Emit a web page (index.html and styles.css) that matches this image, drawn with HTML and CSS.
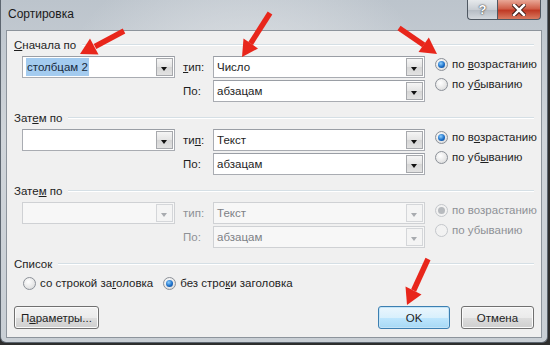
FILE: index.html
```html
<!DOCTYPE html>
<html lang="ru">
  <head>
    <meta charset="UTF-8" />
    <title>Сортировка</title>
    <link rel="stylesheet" href="styles.css">
  </head>
  <body>
    <div class="window">
      <div class="titlebar">
        <span class="title">Сортировка</span>
        <div class="caption">
          <span class="cap-btn help">?</span>
          <span class="cap-btn close">
            <svg width="14" height="12" viewBox="0 0 14 12">
              <path d="M2 1 L12 11 M12 1 L2 11" stroke="#3b1a14" stroke-width="4.5" stroke-linecap="square" />
              <path d="M2 1 L12 11 M12 1 L2 11" stroke="#fff" stroke-width="2.5" stroke-linecap="square" />
            </svg>
          </span>
        </div>
      </div>

      <div class="client">
        <!-- first level -->
        <div class="group">
          <div class="legend"><span><u>С</u>начала по</span></div>
          <div class="sort-grid">
            <div class="combo"><span class="val"><span class="sel">столбцам 2</span></span><span class="drop"></span></div>
            <label class="lbl"><u>т</u>ип:</label>
            <div class="combo"><span class="val">Число</span><span class="drop"></span></div>
            <div class="radios">
              <div class="radio checked"><span class="dot"></span><span>по <u>в</u>озрастанию</span></div>
              <div class="radio"><span class="dot"></span><span>по у<u>б</u>ыванию</span></div>
            </div>
            <label class="lbl lbl-po">По:</label>
            <div class="combo"><span class="val">абзацам</span><span class="drop"></span></div>
          </div>
        </div>

        <!-- second level -->
        <div class="group">
          <div class="legend"><span>Зат<u>е</u>м по</span></div>
          <div class="sort-grid">
            <div class="combo"><span class="val"></span><span class="drop"></span></div>
            <label class="lbl">ти<u>п</u>:</label>
            <div class="combo"><span class="val">Текст</span><span class="drop"></span></div>
            <div class="radios">
              <div class="radio checked"><span class="dot"></span><span>по в<u>о</u>зрастанию</span></div>
              <div class="radio"><span class="dot"></span><span>по уб<u>ы</u>ванию</span></div>
            </div>
            <label class="lbl lbl-po">По:</label>
            <div class="combo"><span class="val">абзацам</span><span class="drop"></span></div>
          </div>
        </div>

        <!-- third level, disabled -->
        <div class="group">
          <div class="legend"><span>Зате<u>м</u> по</span></div>
          <div class="sort-grid disabled">
            <div class="combo"><span class="val"></span><span class="drop"></span></div>
            <label class="lbl">тип:</label>
            <div class="combo"><span class="val">Текст</span><span class="drop"></span></div>
            <div class="radios">
              <div class="radio checked"><span class="dot"></span><span>по возрастанию</span></div>
              <div class="radio"><span class="dot"></span><span>по убыванию</span></div>
            </div>
            <label class="lbl lbl-po">По:</label>
            <div class="combo"><span class="val">абзацам</span><span class="drop"></span></div>
          </div>
        </div>

        <div class="group list-group">
          <div class="legend"><span>Список</span></div>
          <div class="list-row">
            <div class="radio"><span class="dot"></span><span>со строкой за<u>г</u>оловка</span></div>
            <div class="radio checked"><span class="dot"></span><span>без стро<u>к</u>и заголовка</span></div>
          </div>
        </div>

        <div class="footer">
          <button class="btn">П<u>а</u>раметры...</button>
          <span class="spacer"></span>
          <button class="btn default">OK</button>
          <button class="btn">Отмена</button>
        </div>
      </div>

      <svg class="arrows" width="550" height="345" viewBox="0 0 550 345">
        <g stroke="#e8261b" stroke-width="5.5" fill="#e8261b">
          <line x1="124" y1="31" x2="95" y2="46.5" />
          <line x1="270" y1="13" x2="250.6" y2="43.5" />
          <line x1="399" y1="28" x2="423.8" y2="45" />
          <line x1="428" y1="259" x2="413.6" y2="290.5" />
        </g>
        <g fill="#e8261b">
          <polygon points="80,54 98.5,54.5 90,38.5" />
          <polygon points="242,57 258,48.5 243.5,38.5" />
          <polygon points="437,54 428.8,37.5 418.5,52" />
          <polygon points="407,305 421.5,294.5 405.5,286.5" />
        </g>
      </svg>
    </div>
  </body>
</html>
```

FILE: styles.css
```css
* {
  box-sizing: border-box;
}
body {
  margin: 0;
  background-color: #2e2e2e;
  font-family: "Liberation Sans", Arial, sans-serif;
  font-size: 11.5px;
  color: #1e1e1e;
}
.window {
  position: relative;
  width: 548px;
  height: 343px;
  display: flex;
  flex-direction: column;
  padding: 0 5px 4px 5px;
  border: 1px solid #5d6670;
  border-top: none;
  border-radius: 0 0 6px 6px;
  background: radial-gradient(ellipse at 45% 30%, #e2e5e8 0, rgba(226, 229, 232, 0) 45%),
    linear-gradient(#bcc4cc, #d0d5da 40%, #c9cfd5);
}
.titlebar {
  height: 30px;
  display: flex;
  justify-content: space-between;
  align-items: flex-start;
}
.title {
  padding: 7px 0 0 2px;
  font-size: 12px;
  color: #1a1a1a;
}
.caption {
  display: flex;
  margin-right: 1px;
}
.cap-btn {
  height: 20px;
  display: flex;
  align-items: center;
  justify-content: center;
  border: 1px solid #4f5862;
  border-top: none;
}
.help {
  width: 30px;
  border-radius: 0 0 0 4px;
  border-right: none;
  background: linear-gradient(#e6e9ec, #c9ced4 50%, #b4bbc3 52%, #d3d8dd);
  color: #fff;
  font-weight: bold;
  font-size: 13px;
  text-shadow: 0 0 2px #444, 0 0 1px #333;
}
.close {
  width: 44px;
  border-radius: 0 0 4px 0;
  background: linear-gradient(#e9a897, #d0604a 45%, #c03a25 55%, #d97a60);
}
.client {
  flex: 1;
  display: flex;
  flex-direction: column;
  background-color: #f0f0f0;
  border: 1px solid #8d949c;
  padding: 7px 7px 8px 7px;
}
.group {
  margin-bottom: 9px;
}
.legend {
  display: flex;
  align-items: center;
  gap: 6px;
  height: 14px;
  line-height: 14px;
}
.legend::after {
  content: "";
  flex: 1;
  border-top: 1px solid #d5dfe5;
  border-bottom: 1px solid #fff;
}
.sort-grid {
  display: grid;
  grid-template-columns: 153px 38px 212px auto;
  grid-auto-rows: 22px;
  row-gap: 2px;
  margin: 4px 0 0 8px;
}
.lbl {
  padding-left: 8px;
  line-height: 22px;
}
.lbl-po {
  grid-column: 2;
}
.combo {
  display: flex;
  background-color: #fff;
  border: 1px solid #a9acb2;
  border-top-color: #9a9ea5;
}
.val {
  flex: 1;
  padding: 1px 0 0 3px;
  line-height: 18px;
  white-space: nowrap;
}
.sel {
  display: inline-block;
  padding: 0 1px;
  background-color: #a3cbef;
  color: #182a3c;
}
.drop {
  width: 17px;
  margin: 1px;
  border: 1px solid #a7a9ad;
  background: linear-gradient(#f5f5f5, #e4e4e4 50%, #d6d6d6 51%, #e2e2e2);
  position: relative;
}
.drop::after {
  content: "";
  position: absolute;
  left: 4px;
  top: 8px;
  border-left: 3.5px solid transparent;
  border-right: 3.5px solid transparent;
  border-top: 4px solid #111;
}
.radios {
  grid-row: 1 / span 2;
  grid-column: 4;
  margin-top: -2px;
  padding-left: 10px;
}
.radio {
  display: flex;
  align-items: center;
  height: 20px;
  white-space: nowrap;
}
.dot {
  width: 13px;
  height: 13px;
  margin-right: 4px;
  border-radius: 50%;
  border: 1px solid #8c9198;
  background: radial-gradient(circle at 40% 35%, #ffffff, #e6e6e6 60%, #cfd2d6);
  position: relative;
}
.radio.checked .dot::after {
  content: "";
  position: absolute;
  left: 2px;
  top: 2px;
  width: 7px;
  height: 7px;
  border-radius: 50%;
  background: radial-gradient(circle at 40% 35%, #8fd0ff, #1b6fc8 55%, #0c3f85);
}
.disabled {
  color: #8e9196;
}
.disabled .combo {
  background-color: #f7f7f7;
  border-color: #cfd1d4;
}
.disabled .val {
  color: #7d8186;
}
.disabled .drop {
  border-color: #d4d6d9;
  background: #f4f4f4;
}
.disabled .drop::after {
  border-top-color: #a8abaf;
}
.disabled .dot {
  border-color: #c4c7cb;
  background: #f2f2f2;
}
.disabled .radio.checked .dot::after {
  background: #b7babe;
}
.list-row {
  display: flex;
  gap: 10px;
  margin: 3px 0 0 9px;
}
.list-row .radio {
  height: 18px;
}
.footer {
  margin-top: auto;
  display: flex;
  gap: 11px;
}
.spacer {
  flex: 1;
}
.btn {
  height: 23px;
  padding: 0;
  font-family: inherit;
  font-size: 11.5px;
  color: #1e1e1e;
  border: 1px solid #707070;
  border-radius: 3px;
  background: linear-gradient(#f2f2f2, #ebebeb 50%, #dddddd 51%, #cfcfcf);
  box-shadow: inset 0 0 0 1px #fbfbfb;
}
.btn:first-child {
  width: 85px;
}
.btn.default {
  width: 72px;
  border-color: #3c7fb1;
  background: linear-gradient(#eaf6fd, #d9f0fc 50%, #bee6fd 51%, #a7d9f5);
  box-shadow: inset 0 0 0 1px #c4e4f7;
}
.btn:last-child {
  width: 73px;
}
.arrows {
  position: absolute;
  left: -1px;
  top: 0;
  pointer-events: none;
}
```
